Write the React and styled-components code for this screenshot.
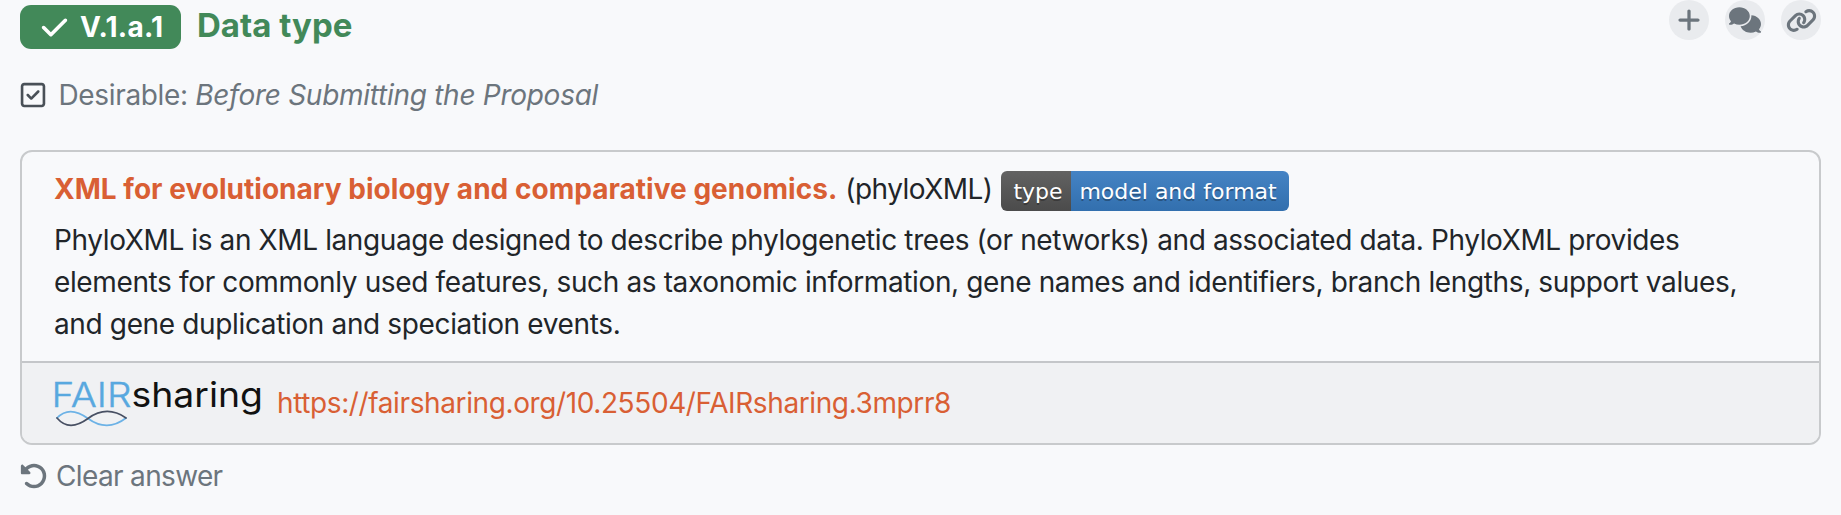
import React from "react";
import styled, { createGlobalStyle, css } from "styled-components";
import { FaCheck, FaRegSquareCheck, FaPlus, FaComments, FaLink, FaRotateLeft } from "react-icons/fa6";

const GlobalStyle = createGlobalStyle`
  body {
    margin: 0;
    background: #f8f9fb;
    color: #212529;
    font: 28px/42px Inter, "Liberation Sans", sans-serif;
  }
  * { box-sizing: border-box; }
  svg { display: block; flex: none; }
`;

const Page = styled.main`
  height: 515px;
  padding: 0 20px;
  overflow: hidden;
`;

const Header = styled.header`
  display: flex;
  align-items: flex-start;
  height: 74px;
`;

const NumberBadge = styled.span`
  display: flex;
  align-items: center;
  gap: 11px;
  width: 161px;
  height: 44px;
  margin-top: 5px;
  padding-left: 20px;
  border-radius: 11px;
  background: #428959;
  color: #fff;
  font-weight: 700;
`;

const Heading = styled.h2`
  flex: 1;
  margin: 5px 0 0 16px;
  color: #428959;
  font-size: 33px;
  font-weight: 700;
  line-height: 40px;
`;

const Actions = styled.div`
  display: flex;
  gap: 16px;
`;

const RoundButton = styled.button`
  display: grid;
  place-items: center;
  width: 40px;
  height: 40px;
  padding: 0;
  border: 0;
  border-radius: 50%;
  background: #e9ebee;
  color: #6c757d;
`;

const Requirement = styled.div`
  display: flex;
  align-items: center;
  height: 42px;
  color: #6c757d;
  svg { color: #495057; margin: 0 12px 0 -1.5px; }
`;

const Card = styled.section`
  height: 295px;
  margin-top: 34px;
  border: 2px solid #c8cacc;
  border-radius: 12px;
  overflow: hidden;
`;

const CardBody = styled.div`
  height: 209px;
  padding: 16px 32px 0;
`;

const TitleRow = styled.div`
  display: flex;
  align-items: center;
  height: 42px;
  margin-bottom: 9px;
`;

const Track = styled.span`
  white-space: pre;
  letter-spacing: ${(p) => p.$ls || 0}px;
  ${(p) => p.$italic && css`font-style: italic;`}
`;

const TitleLink = styled.a`
  margin-right: 8px;
  color: #d95f34;
  font-weight: 700;
`;

const TypeBadge = styled.span`
  display: flex;
  height: 40px;
  margin: 4px 0 0 9px;
  border-radius: 6px;
  overflow: hidden;
  color: #fff;
  font: 22px/42px "DejaVu Sans", sans-serif;
  text-shadow: 0 2px 0 rgba(1, 1, 1, 0.3);
`;

const BadgePart = styled.span`
  width: ${(p) => p.$width}px;
  padding-left: ${(p) => p.$pad}px;
  background: linear-gradient(${(p) => p.$from}, ${(p) => p.$to});
`;

const Description = styled.p`
  margin: 0;
`;

const Line = styled.span`
  display: block;
`;

const CardFooter = styled.footer`
  display: flex;
  align-items: center;
  height: 82px;
  padding-left: 30px;
  border-top: 2px solid #c4c6c9;
  background: #f0f1f3;
`;

const FooterLink = styled.a`
  margin-left: 13px;
  color: #d95f34;
`;

const ClearButton = styled.button`
  display: flex;
  align-items: center;
  gap: 8px;
  height: 42px;
  margin-top: 10px;
  padding: 0;
  border: 0;
  background: none;
  color: #6c757d;
  font: inherit;
`;

function Logo() {
  return (
    <svg width="212" height="64" viewBox="52 371 212 64" fontFamily="Inter, sans-serif">
      <text x="51.500" y="406.5" fontSize="34.5" fontWeight="300" fill="#58a8df" stroke="#58a8df" strokeWidth="0.4" textLength="80" lengthAdjust="spacingAndGlyphs">FAIR</text>
      <text x="131.500" y="406.5" fontSize="34.5" fontWeight="400" fill="#111" textLength="131.5" lengthAdjust="spacingAndGlyphs">sharing</text>
      <g fill="none" strokeWidth="1.7" strokeLinecap="round">
        <path d="M57 418C65 409.500 75 409 88 418.500S113 428 126 418" stroke="#6cb2e6" />
        <path d="M57 418C65 427.500 75 428 88 418.500S113 409 126 418" stroke="#485063" />
      </g>
    </svg>
  );
}

export default function App() {
  return (
    <>
      <GlobalStyle />
      <Page>
        <Header>
          <NumberBadge><FaCheck size={29} /><Track $ls={0.25}>V.1.a.1</Track></NumberBadge>
          <Heading><Track>Data type</Track></Heading>
          <Actions>
            <RoundButton aria-label="Add"><FaPlus size={26} /></RoundButton>
            <RoundButton aria-label="Comments"><FaComments size={32} /></RoundButton>
            <RoundButton aria-label="Copy link"><FaLink size={31} /></RoundButton>
          </Actions>
        </Header>
        <Requirement>
          <FaRegSquareCheck size={28} />
          <Track $ls={-0.35}>{"Desirable: "}</Track>
          <Track $ls={-0.28} $italic>Before Submitting the Proposal</Track>
        </Requirement>
        <Card>
          <CardBody>
            <TitleRow>
              <TitleLink><Track $ls={0.03}>XML for evolutionary biology and comparative genomics.</Track></TitleLink>
              <Track $ls={-0.55}>(phyloXML)</Track>
              <TypeBadge>
                <BadgePart $width={70} $pad={12} $from="#626262" $to="#4b4b4b"><Track>type</Track></BadgePart>
                <BadgePart $width={218} $pad={8} $from="#4583c4" $to="#326fae"><Track>model and format</Track></BadgePart>
              </TypeBadge>
            </TitleRow>
            <Description>
              <Line><Track $ls={-0.385}>PhyloXML is an XML language designed to describe phylogenetic trees (or networks) and associated data. PhyloXML provides</Track></Line>
              <Line><Track $ls={-0.37}>elements for commonly used features, such as taxonomic information, gene names and identifiers, branch lengths, support values,</Track></Line>
              <Line><Track $ls={-0.36}>and gene duplication and speciation events.</Track></Line>
            </Description>
          </CardBody>
          <CardFooter>
            <Logo />
            <FooterLink><Track $ls={-0.39}>https://fairsharing.org/10.25504/FAIRsharing.3mprr8</Track></FooterLink>
          </CardFooter>
        </Card>
        <ClearButton><FaRotateLeft size={28} /><Track $ls={-0.65}>Clear answer</Track></ClearButton>
      </Page>
    </>
  );
}
